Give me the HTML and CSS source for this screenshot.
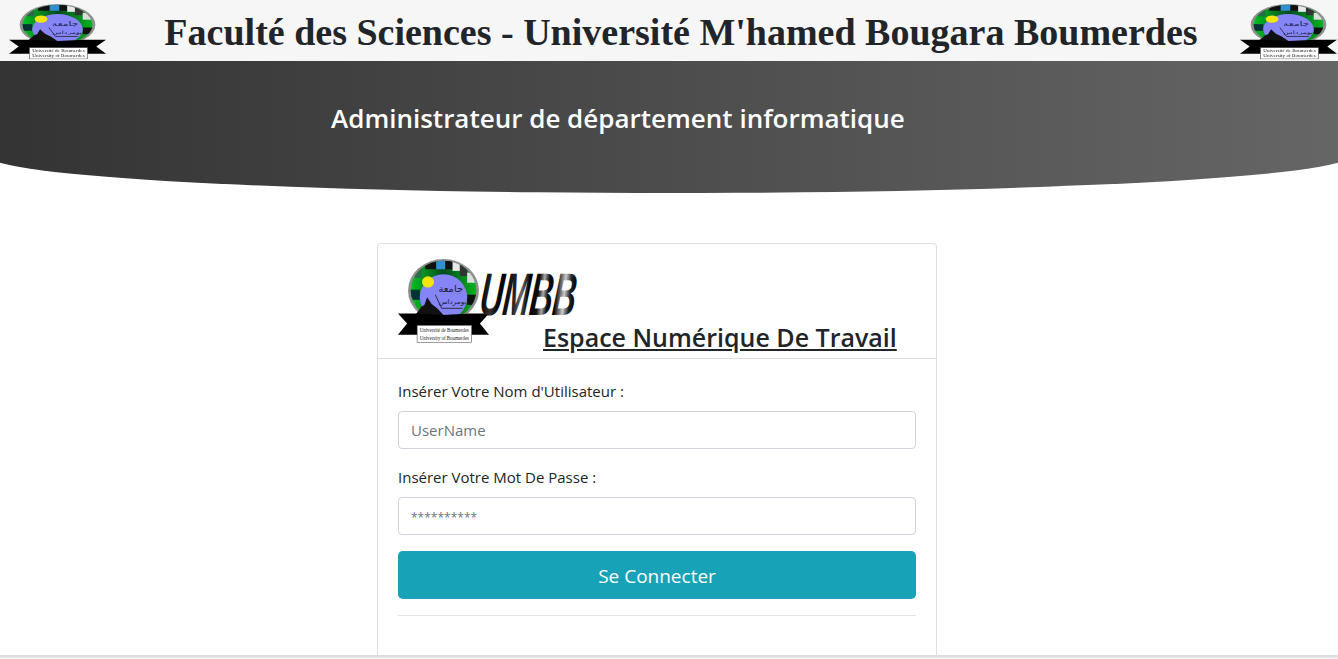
FILE: index.html
```html
<!DOCTYPE html>
<html>
<head>
    <meta charset="utf-8">
    <title>Espace Numérique De Travail</title>
    <link rel="stylesheet" href="styles.css">
</head>
<body>
    <svg class="defs" width="0" height="0">
        <defs>
            <linearGradient id="umbbFill" x1="0" y1="0" x2="1" y2="0">
                <stop offset="0" stop-color="#000"/>
                <stop offset="0.12" stop-color="#333"/>
                <stop offset="0.2" stop-color="#000"/>
                <stop offset="0.35" stop-color="#222"/>
                <stop offset="0.42" stop-color="#666"/>
                <stop offset="0.5" stop-color="#000"/>
                <stop offset="0.6" stop-color="#111"/>
                <stop offset="0.65" stop-color="#aaa"/>
                <stop offset="0.7" stop-color="#111"/>
                <stop offset="0.78" stop-color="#000"/>
                <stop offset="0.87" stop-color="#ccc"/>
                <stop offset="0.93" stop-color="#222"/>
                <stop offset="1" stop-color="#000"/>
            </linearGradient>
            <linearGradient id="ringFill" x1="0" y1="0" x2="1" y2="0">
                <stop offset="0" stop-color="#00d020"/>
                <stop offset="0.5" stop-color="#064a20"/>
                <stop offset="1" stop-color="#00c020"/>
            </linearGradient>
            <clipPath id="ovalClip">
                <ellipse cx="50" cy="37" rx="36" ry="35"/>
            </clipPath>
            <symbol id="logo" viewBox="0 0 100 100" preserveAspectRatio="none">
                <ellipse cx="50" cy="37" rx="39" ry="37" fill="#8f8f8f"/>
                <g clip-path="url(#ovalClip)">
                    <rect x="10" y="0" width="80" height="75" fill="url(#ringFill)"/>
                    <rect x="30" y="0" width="12" height="12" fill="#111"/>
                    <rect x="42" y="0" width="10" height="12" fill="#2f8fd0"/>
                    <rect x="52" y="0" width="8" height="12" fill="#111"/>
                    <rect x="60" y="0" width="8" height="14" fill="#e8e8e8"/>
                    <rect x="68" y="4" width="8" height="16" fill="#333"/>
                    <rect x="18" y="8" width="8" height="14" fill="#2a6a4a"/>
                    <rect x="12" y="36" width="12" height="12" fill="#033"/>
                    <rect x="76" y="16" width="12" height="12" fill="#ddd"/>
                    <rect x="76" y="42" width="12" height="12" fill="#111"/>
                </g>
                <ellipse cx="50" cy="45" rx="26" ry="27" fill="#8585f8"/>
                <circle cx="33" cy="27" r="6.6" fill="#f5e60a"/>
                <path d="M19 66 L26 56 L29 54 L32 45 L37 53 L43 58 L50 66 Z" fill="#111"/>
                <text class="logo-ar" x="58" y="39" text-anchor="middle">جامعة</text>
                <text class="logo-ar-small" x="60" y="53" text-anchor="middle">بومرداس</text>
                <path d="M41 42 L48 58 L71 58" fill="none" stroke="#222" stroke-width="1"/>
                <path d="M0 64 L22 64 L50 66 L78 64 L100 64 L90 76 L100 89 L0 89 L10 76 Z" fill="#000"/>
                <rect x="21" y="78" width="60" height="20" fill="#fff" stroke="#444" stroke-width="0.6"/>
                <text class="logo-label" x="51" y="86" text-anchor="middle" textLength="54" lengthAdjust="spacingAndGlyphs">Université de Boumerdes</text>
                <text class="logo-label" x="51" y="95" text-anchor="middle" textLength="54" lengthAdjust="spacingAndGlyphs">University of Boumerdes</text>
            </symbol>
        </defs>
    </svg>

    <div class="page">
        <header class="topbar">
            <svg class="topbar-logo"><use href="#logo"/></svg>
            <h1 class="topbar-title">Faculté des Sciences - Université M'hamed Bougara Boumerdes</h1>
            <svg class="topbar-logo"><use href="#logo"/></svg>
        </header>

        <section class="hero">
            <h2 class="hero-title">Administrateur de département informatique</h2>
        </section>

        <main class="card">
            <div class="card-header">
                <svg class="card-logo"><use href="#logo"/></svg>
                <svg class="umbb" viewBox="0 0 98 46">
                    <text class="umbb-text" x="0" y="43" textLength="96" lengthAdjust="spacingAndGlyphs" fill="url(#umbbFill)" transform="translate(3 0) skewX(-6)">UMBB</text>
                </svg>
                <h3 class="card-title">Espace Numérique De Travail</h3>
            </div>
            <form class="card-body">
                <label class="field-label" for="username">Insérer Votre Nom d'Utilisateur :</label>
                <input class="field-input" type="text" id="username" placeholder="UserName">
                <label class="field-label" for="password">Insérer Votre Mot De Passe :</label>
                <input class="field-input field-password" type="text" id="password" placeholder="**********">
                <button class="btn-connect" type="button">Se Connecter</button>
                <hr class="divider">
            </form>
        </main>
    </div>
</body>
</html>
```

FILE: styles.css
```css
* {
    box-sizing: border-box;
}

html,
body {
    margin: 0;
    height: 100%;
    overflow: hidden;
    background-color: #f1f1f1;
}

body {
    font-family: "Open Sans", "Noto Sans", sans-serif;
    color: #212529;
}

.defs {
    display: block;
    height: 0;
}

.page {
    height: 657px;
    overflow: hidden;
    background-color: #fff;
    border-bottom: 2px solid #dcdcdc;
}

.topbar {
    display: flex;
    align-items: flex-start;
    justify-content: space-between;
    height: 61px;
    padding: 4px 1px 0 9px;
    background-color: #f6f6f6;
}

.topbar-logo {
    width: 97px;
    height: 56px;
    flex: none;
    filter: blur(0.4px);
}

.topbar-title {
    margin: -1px 0 0 16px;
    font-family: "Liberation Serif", "Times New Roman", serif;
    font-size: 38px;
    font-weight: bold;
    line-height: 58px;
    white-space: nowrap;
}

.hero {
    height: 132px;
    margin: 0 -11px;
    padding: 37px 0 0 342px;
    background: linear-gradient(to right, #333333, #666666);
    border-radius: 0 0 680px 680px / 0 0 37px 37px;
}

.hero-title {
    margin: 0;
    color: #fff;
    font-size: 26px;
    font-weight: 600;
    line-height: 40px;
}

.card {
    width: 560px;
    height: 460px;
    margin: 50px 0 0 377px;
    background-color: #fff;
    border: 1px solid rgba(0, 0, 0, 0.125);
    border-radius: 4px;
}

.card-header {
    display: flex;
    align-items: flex-start;
    height: 115px;
    padding: 15px 0 0 20px;
    border-bottom: 1px solid rgba(0, 0, 0, 0.125);
}

.card-logo {
    width: 91px;
    height: 85px;
    flex: none;
}

.umbb {
    width: 98px;
    height: 46px;
    margin: 13px 0 0 -9px;
    flex: none;
    overflow: visible;
}

.umbb-text {
    font-family: "Liberation Sans", Arial, sans-serif;
    font-size: 60px;
    font-weight: bold;
    font-style: italic;
}

.card-title {
    margin: 62px 0 0 -35px;
    font-size: 25px;
    font-weight: 600;
    line-height: 32px;
    text-decoration: underline;
    white-space: nowrap;
}

.logo-ar {
    font-family: "Noto Sans", "DejaVu Sans", sans-serif;
    font-size: 11px;
    fill: #1a1a3a;
}

.logo-ar-small {
    font-family: "Noto Sans", "DejaVu Sans", sans-serif;
    font-size: 8px;
    fill: #1a1a3a;
}

.logo-label {
    font-family: "Liberation Serif", serif;
    font-size: 7px;
    fill: #222;
}

.card-body {
    display: flex;
    flex-direction: column;
    padding: 20px;
}

.field-label {
    margin-bottom: 8px;
    font-size: 15px;
    line-height: 24px;
}

.field-input {
    height: 38px;
    margin-bottom: 16px;
    padding: 6px 12px;
    color: #495057;
    font-family: inherit;
    font-size: 15px;
    background-color: #fff;
    border: 1px solid #ced4da;
    border-radius: 4px;
}

.field-input::placeholder {
    color: #6c757d;
}

.field-password::placeholder {
    font-size: 12px;
}

.btn-connect {
    height: 48px;
    padding-top: 2px;
    color: #fff;
    font-family: inherit;
    font-size: 19px;
    background-color: #17a2b8;
    border: none;
    border-radius: 4.8px;
}

.divider {
    width: 100%;
    margin: 16px 0 0;
    border: 0;
    border-top: 1px solid rgba(0, 0, 0, 0.1);
}
```
